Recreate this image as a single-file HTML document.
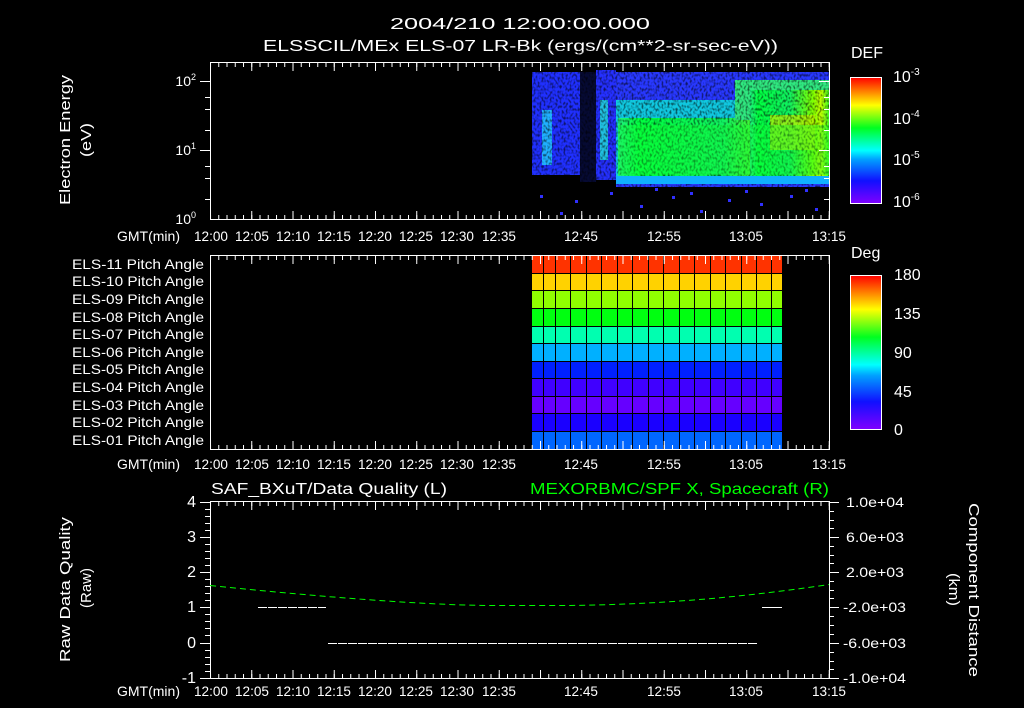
<!DOCTYPE html>
<html><head><meta charset="utf-8"><style>
html,body{margin:0;padding:0;background:#000;}
svg{display:block;font-family:"Liberation Sans",sans-serif;}
text{fill:#fff;font-size:14px;}
</style></head><body>
<svg width="1024" height="708" viewBox="0 0 1024 708" xmlns="http://www.w3.org/2000/svg">
<defs>
<pattern id="tkMin" x="210" y="0" width="8.25" height="708" patternUnits="userSpaceOnUse"><rect x="0" y="0" width="1" height="708" fill="#fff"/></pattern>
<pattern id="tkMaj" x="210" y="0" width="41.25" height="708" patternUnits="userSpaceOnUse"><rect x="0" y="0" width="1" height="708" fill="#fff"/></pattern>
<linearGradient id="cb" x1="0" y1="1" x2="0" y2="0">
<stop offset="0" stop-color="#8000ff"/><stop offset="0.18" stop-color="#1010ff"/><stop offset="0.35" stop-color="#00a0ff"/><stop offset="0.42" stop-color="#00ffff"/><stop offset="0.6" stop-color="#00ff20"/><stop offset="0.78" stop-color="#ffff00"/><stop offset="1" stop-color="#ff0000"/></linearGradient>
<linearGradient id="grn" x1="0" y1="0" x2="1" y2="0">
<stop offset="0" stop-color="#20f080"/><stop offset="0.1" stop-color="#00ff40"/><stop offset="0.5" stop-color="#10f060"/><stop offset="0.8" stop-color="#80ff00"/><stop offset="0.9" stop-color="#c0ff00"/><stop offset="1" stop-color="#40ff20"/></linearGradient>
<filter id="spk"><feTurbulence type="fractalNoise" baseFrequency="0.5 0.35" numOctaves="1" seed="3"/><feColorMatrix type="matrix" values="0 0 0 0 0  0 0 0 0 0  0 0 0 0 0  0 0 0 -3 1.7"/></filter>
</defs>

<text x="390" y="29" textLength="260" lengthAdjust="spacingAndGlyphs" style="font-size:16px">2004/210 12:00:00.000</text>
<text x="263" y="51" textLength="515" lengthAdjust="spacingAndGlyphs" style="font-size:16px">ELSSCIL/MEx ELS-07 LR-Bk  (ergs/(cm**2-sr-sec-eV))</text>

<g>
<rect x="532" y="72" width="48" height="103" fill="#2030ff"/>
<rect x="542" y="110" width="10" height="55" fill="#20b0ff"/>
<rect x="580" y="72" width="16" height="110" fill="#2030ff" opacity="0.2"/>
<rect x="596" y="70" width="20" height="110" fill="#2530ff"/>
<rect x="600" y="100" width="8" height="60" fill="#20c0e0"/>
<rect x="616" y="72" width="213" height="115" fill="#2838ff"/>
<rect x="616" y="100" width="213" height="82" fill="#10c8e0"/>
<rect x="618" y="118" width="211" height="60" fill="url(#grn)"/>
<rect x="735" y="80" width="94" height="40" fill="#30e880"/>
<rect x="750" y="90" width="79" height="88" fill="url(#grn)"/>
<rect x="770" y="115" width="45" height="35" fill="#c0f000" opacity="0.7"/>
<rect x="532" y="62" width="297" height="128" fill="#000" filter="url(#spk)" opacity="0.6"/>
<rect x="618" y="125" width="211" height="50" fill="#10ff30" opacity="0.35"/>
<rect x="616" y="176" width="213" height="8" fill="#10b0ff"/>
<g fill="#3030ff">
<rect x="540" y="195" width="3" height="3"/><rect x="575" y="200" width="3" height="3"/><rect x="610" y="192" width="3" height="3"/><rect x="640" y="205" width="3" height="3"/><rect x="672" y="196" width="3" height="3"/><rect x="700" y="210" width="3" height="3"/><rect x="728" y="199" width="3" height="3"/><rect x="760" y="203" width="3" height="3"/><rect x="790" y="195" width="3" height="3"/><rect x="815" y="208" width="3" height="3"/><rect x="655" y="188" width="3" height="3"/><rect x="745" y="190" width="3" height="3"/><rect x="560" y="212" width="3" height="3"/><rect x="690" y="192" width="3" height="3"/><rect x="805" y="189" width="3" height="3"/>
</g>
</g>
<rect x="210" y="62" width="619" height="1" fill="#fff"/>
<rect x="210" y="219" width="620" height="1" fill="#fff"/>
<rect x="210" y="62" width="1" height="158" fill="#fff"/>
<rect x="829" y="62" width="1" height="158" fill="#fff"/>
<rect x="210" y="63" width="620" height="4" fill="url(#tkMin)"/>
<rect x="210" y="63" width="620" height="8" fill="url(#tkMaj)"/>
<rect x="210" y="215" width="620" height="4" fill="url(#tkMin)"/>
<rect x="210" y="211" width="620" height="8" fill="url(#tkMaj)"/>
<g fill="#fff">
<rect x="200" y="81" width="10" height="1"/><rect x="200" y="150" width="10" height="1"/>
<rect x="205" y="97" width="5" height="1"/><rect x="205" y="109" width="5" height="1"/><rect x="205" y="130" width="5" height="1"/><rect x="205" y="178" width="5" height="1"/><rect x="205" y="199" width="5" height="1"/><rect x="205" y="166" width="5" height="1"/>
<rect x="819" y="81" width="10" height="1"/><rect x="819" y="150" width="10" height="1"/>
<rect x="824" y="97" width="5" height="1"/><rect x="824" y="109" width="5" height="1"/><rect x="824" y="130" width="5" height="1"/><rect x="824" y="178" width="5" height="1"/><rect x="824" y="199" width="5" height="1"/><rect x="824" y="166" width="5" height="1"/>
</g>
<text x="196" y="86" text-anchor="end">10<tspan dy="-6" style="font-size:9px">2</tspan></text>
<text x="196" y="155" text-anchor="end">10<tspan dy="-6" style="font-size:9px">1</tspan></text>
<text x="196" y="224" text-anchor="end">10<tspan dy="-6" style="font-size:9px">0</tspan></text>
<text transform="translate(70,205) rotate(-90)" textLength="130" lengthAdjust="spacingAndGlyphs" style="font-size:15px">Electron Energy</text>
<text transform="translate(91,157) rotate(-90)" textLength="34" lengthAdjust="spacingAndGlyphs" style="font-size:15px">(eV)</text>
<text x="851" y="58" style="font-size:16px">DEF</text>
<rect x="850.5" y="77.5" width="31" height="126" fill="url(#cb)" stroke="#fff"/>
<text x="893" y="82" style="font-size:16px">10<tspan dy="-7" style="font-size:10px">-3</tspan></text>
<text x="893" y="124" style="font-size:16px">10<tspan dy="-7" style="font-size:10px">-4</tspan></text>
<text x="893" y="165" style="font-size:16px">10<tspan dy="-7" style="font-size:10px">-5</tspan></text>
<text x="893" y="207" style="font-size:16px">10<tspan dy="-7" style="font-size:10px">-6</tspan></text>

<g id="tl">
<text x="117" y="241" textLength="63" lengthAdjust="spacingAndGlyphs">GMT(min)</text>
<g text-anchor="middle">
<text x="211" y="241" textLength="34" lengthAdjust="spacingAndGlyphs">12:00</text><text x="252" y="241" textLength="34" lengthAdjust="spacingAndGlyphs">12:05</text><text x="293" y="241" textLength="34" lengthAdjust="spacingAndGlyphs">12:10</text><text x="334" y="241" textLength="34" lengthAdjust="spacingAndGlyphs">12:15</text><text x="375" y="241" textLength="34" lengthAdjust="spacingAndGlyphs">12:20</text><text x="416" y="241" textLength="34" lengthAdjust="spacingAndGlyphs">12:25</text><text x="457" y="241" textLength="34" lengthAdjust="spacingAndGlyphs">12:30</text><text x="499" y="241" textLength="34" lengthAdjust="spacingAndGlyphs">12:35</text><text x="581" y="241" textLength="34" lengthAdjust="spacingAndGlyphs">12:45</text><text x="664" y="241" textLength="34" lengthAdjust="spacingAndGlyphs">12:55</text><text x="746" y="241" textLength="34" lengthAdjust="spacingAndGlyphs">13:05</text><text x="829" y="241" textLength="34" lengthAdjust="spacingAndGlyphs">13:15</text>
</g>
</g>
<use href="#tl" y="228"/>
<use href="#tl" y="455"/>

<g>
<rect x="532" y="256" width="250" height="18" fill="#ff3300"/>
<rect x="532" y="273" width="250" height="18" fill="#ffd200"/>
<rect x="532" y="291" width="250" height="18" fill="#90ff00"/>
<rect x="532" y="309" width="250" height="18" fill="#00ff10"/>
<rect x="532" y="326" width="250" height="18" fill="#00ffb0"/>
<rect x="532" y="344" width="250" height="18" fill="#00b0ff"/>
<rect x="532" y="361" width="250" height="18" fill="#0020ff"/>
<rect x="532" y="379" width="250" height="18" fill="#4000ff"/>
<rect x="532" y="396" width="250" height="18" fill="#6600ff"/>
<rect x="532" y="414" width="250" height="18" fill="#1a00ff"/>
<rect x="532" y="432" width="250" height="18" fill="#0066ff"/>
<g fill="#000">
<rect x="532" y="273" width="250" height="1"/><rect x="532" y="290" width="250" height="1"/><rect x="532" y="308" width="250" height="1"/><rect x="532" y="326" width="250" height="1"/><rect x="532" y="343" width="250" height="1"/><rect x="532" y="361" width="250" height="1"/><rect x="532" y="378" width="250" height="1"/><rect x="532" y="396" width="250" height="1"/><rect x="532" y="413" width="250" height="1"/><rect x="532" y="431" width="250" height="1"/>
<rect x="555" y="256" width="1" height="194"/><rect x="570" y="256" width="1" height="194"/><rect x="586" y="256" width="1" height="194"/><rect x="601" y="256" width="1" height="194"/><rect x="617" y="256" width="1" height="194"/><rect x="632" y="256" width="1" height="194"/><rect x="648" y="256" width="1" height="194"/><rect x="663" y="256" width="1" height="194"/><rect x="679" y="256" width="1" height="194"/><rect x="694" y="256" width="1" height="194"/><rect x="710" y="256" width="1" height="194"/><rect x="725" y="256" width="1" height="194"/><rect x="741" y="256" width="1" height="194"/><rect x="756" y="256" width="1" height="194"/><rect x="771" y="256" width="1" height="194"/><rect x="543" y="256" width="1" height="194"/>
</g>
</g>
<rect x="210" y="255" width="620" height="1" fill="#fff"/>
<rect x="210" y="449" width="620" height="1" fill="#fff"/>
<rect x="210" y="255" width="1" height="195" fill="#fff"/>
<rect x="829" y="255" width="1" height="195" fill="#fff"/>
<rect x="210" y="256" width="620" height="4" fill="url(#tkMin)"/>
<rect x="210" y="256" width="620" height="8" fill="url(#tkMaj)"/>
<rect x="210" y="445" width="620" height="4" fill="url(#tkMin)"/>
<rect x="210" y="441" width="620" height="8" fill="url(#tkMaj)"/>
<g>
<text x="72" y="269" textLength="132" lengthAdjust="spacingAndGlyphs">ELS-11 Pitch Angle</text><text x="72" y="286" textLength="132" lengthAdjust="spacingAndGlyphs">ELS-10 Pitch Angle</text><text x="72" y="304" textLength="132" lengthAdjust="spacingAndGlyphs">ELS-09 Pitch Angle</text><text x="72" y="322" textLength="132" lengthAdjust="spacingAndGlyphs">ELS-08 Pitch Angle</text><text x="72" y="339" textLength="132" lengthAdjust="spacingAndGlyphs">ELS-07 Pitch Angle</text><text x="72" y="357" textLength="132" lengthAdjust="spacingAndGlyphs">ELS-06 Pitch Angle</text><text x="72" y="374" textLength="132" lengthAdjust="spacingAndGlyphs">ELS-05 Pitch Angle</text><text x="72" y="392" textLength="132" lengthAdjust="spacingAndGlyphs">ELS-04 Pitch Angle</text><text x="72" y="410" textLength="132" lengthAdjust="spacingAndGlyphs">ELS-03 Pitch Angle</text><text x="72" y="427" textLength="132" lengthAdjust="spacingAndGlyphs">ELS-02 Pitch Angle</text><text x="72" y="445" textLength="132" lengthAdjust="spacingAndGlyphs">ELS-01 Pitch Angle</text>
</g>
<text x="851" y="258" style="font-size:16px">Deg</text>
<rect x="850.5" y="275.5" width="31" height="154" fill="url(#cb)" stroke="#fff"/>
<text x="894" y="280" style="font-size:16px">180</text><text x="894" y="319" style="font-size:16px">135</text><text x="894" y="358" style="font-size:16px">90</text><text x="894" y="397" style="font-size:16px">45</text><text x="894" y="435" style="font-size:16px">0</text>

<text x="211" y="494" textLength="236" lengthAdjust="spacingAndGlyphs" style="font-size:16px">SAF_BXuT/Data Quality (L)</text>
<text x="530" y="494" textLength="299" lengthAdjust="spacingAndGlyphs" style="font-size:16px;fill:#00ff00">MEXORBMC/SPF X, Spacecraft (R)</text>
<rect x="210" y="501" width="620" height="1" fill="#fff"/>
<rect x="210" y="678" width="620" height="1" fill="#fff"/>
<rect x="210" y="501" width="1" height="178" fill="#fff"/>
<rect x="829" y="501" width="1" height="178" fill="#fff"/>
<rect x="210" y="502" width="620" height="4" fill="url(#tkMin)"/>
<rect x="210" y="502" width="620" height="8" fill="url(#tkMaj)"/>
<rect x="210" y="674" width="620" height="4" fill="url(#tkMin)"/>
<rect x="210" y="670" width="620" height="8" fill="url(#tkMaj)"/>
<g stroke="#fff" stroke-width="1">
<path d="M200 502.5h10M200 537.5h10M200 572.5h10M200 607.5h10M200 643.5h10M200 678.5h10M205 509.5h5M205 516.5h5M205 523.5h5M205 530.5h5M205 544.5h5M205 551.5h5M205 558.5h5M205 565.5h5M205 579.5h5M205 586.5h5M205 593.5h5M205 600.5h5M205 614.5h5M205 621.5h5M205 628.5h5M205 635.5h5M205 650.5h5M205 657.5h5M205 664.5h5M205 671.5h5"/>
<path d="M829 502.5h10M829 537.5h10M829 572.5h10M829 607.5h10M829 643.5h10M829 678.5h10M829 511.5h5M829 520.5h5M829 528.5h5M829 546.5h5M829 555.5h5M829 563.5h5M829 581.5h5M829 590.5h5M829 598.5h5M829 616.5h5M829 625.5h5M829 634.5h5M829 652.5h5M829 661.5h5M829 669.5h5"/>
</g>
<g text-anchor="end">
<text x="196" y="507" style="font-size:16px">4</text><text x="196" y="542" style="font-size:16px">3</text><text x="196" y="577" style="font-size:16px">2</text><text x="196" y="612" style="font-size:16px">1</text><text x="196" y="648" style="font-size:16px">0</text><text x="196" y="683" style="font-size:16px">-1</text>
</g>
<g style="font-size:13px">
<text x="846" y="507" textLength="58" lengthAdjust="spacingAndGlyphs">1.0e+04</text><text x="846" y="542" textLength="58" lengthAdjust="spacingAndGlyphs">6.0e+03</text><text x="846" y="577" textLength="58" lengthAdjust="spacingAndGlyphs">2.0e+03</text><text x="843" y="612" textLength="63" lengthAdjust="spacingAndGlyphs">-2.0e+03</text><text x="843" y="648" textLength="63" lengthAdjust="spacingAndGlyphs">-6.0e+03</text><text x="843" y="683" textLength="63" lengthAdjust="spacingAndGlyphs">-1.0e+04</text>
</g>
<text transform="translate(70,662) rotate(-90)" textLength="145" lengthAdjust="spacingAndGlyphs" style="font-size:15px">Raw Data Quality</text>
<text transform="translate(91,608) rotate(-90)" textLength="40" lengthAdjust="spacingAndGlyphs" style="font-size:15px">(Raw)</text>
<text transform="translate(969,503) rotate(90)" textLength="174" lengthAdjust="spacingAndGlyphs" style="font-size:15px">Component Distance</text>
<text transform="translate(949,573) rotate(90)" textLength="33" lengthAdjust="spacingAndGlyphs" style="font-size:15px">(km)</text>
<path d="M210 585.5 Q390 604 485 605.5 L570 605.5 Q700 604 829 584.5" fill="none" stroke="#00ff00" stroke-width="1" stroke-dasharray="6,4"/>
<g stroke="#fff" stroke-width="1">
<path d="M258 607.5h68" stroke-dasharray="9,1"/>
<path d="M328 643.5h430" stroke-dasharray="9,1"/>
<path d="M762 607.5h20"/>
</g>
</svg>
</body></html>
